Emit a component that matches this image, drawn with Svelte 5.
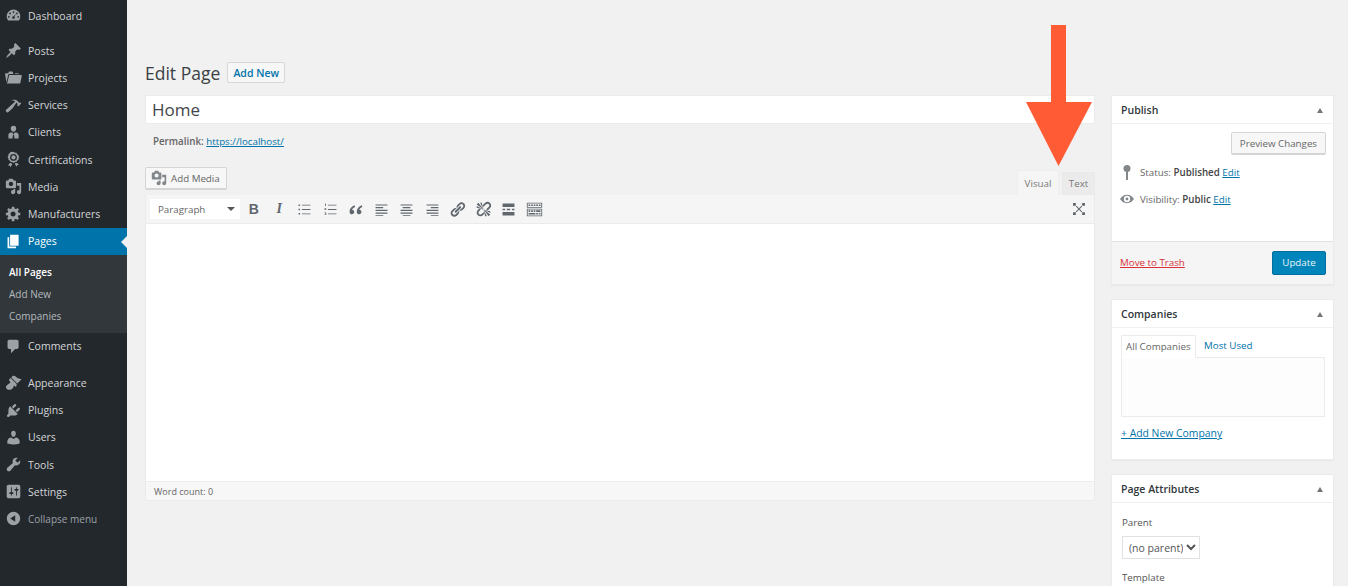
<script>
	// Dashicons style paths, 20x20 box
	const icons = {
		dashboard: "M3.76 16h12.48A7.98 7.98 0 0 0 18 11a8 8 0 0 0-16 0c0 1.9.66 3.64 1.76 5zM10 5a1 1 0 1 1 0 2 1 1 0 0 1 0-2zM6 6.5a1 1 0 1 1 0 2 1 1 0 0 1 0-2zM4.5 10.5a1 1 0 1 1 0 2 1 1 0 0 1 0-2zM14 6.5a1 1 0 1 1 0 2 1 1 0 0 1 0-2zM15.5 10.5a1 1 0 1 1 0 2 1 1 0 0 1 0-2zM12.8 7.6l-1.6 4a1.5 1.5 0 1 1-2.4 0 1.5 1.5 0 0 1 1.6-.6z",
		post: "M10.44 3.02l1.82-1.82 6.36 6.35-1.83 1.82c-1.05-.68-2.48-.57-3.41.36l-.75.75c-.92.93-1.04 2.35-.35 3.41l-1.83 1.82-2.41-2.41-2.8 2.79c-.42.42-3.38 2.71-3.8 2.29s1.86-3.39 2.28-3.81l2.79-2.79L4.1 9.36l1.83-1.82c1.05.69 2.48.57 3.4-.36l.75-.75c.93-.92 1.05-2.35.36-3.41z",
		folder: "M4 5H.78c-.37 0-.74.32-.69.84l1.56 9.99S3.5 8.47 3.86 6.7c.11-.53.61-.7.98-.7H10s-.7-2.08-.77-2.31C9.11 3.25 8.89 3 8.45 3H5.14c-.36 0-.7.23-.8.64C4.25 4.04 4 5 4 5zm-1.33 11.25c-.31.47-.76.75-1.26.75h15.73c.54 0 .92-.31 1.03-.83.44-2.19 1.68-8.44 1.68-8.44.07-.5-.3-.73-.62-.73H16V5.53c0-.16-.26-.53-.66-.53h-3.76s.41 1 .87 1h2.91c.16 0 .3 0 .3.3V7H5.59c-.32 0-.68.2-.78.52 0 0-1.9 7.9-2.14 8.73z",
		hammer: "M17.7 6.32l1.41 1.42-3.47 3.41-1.42-1.42.84-.82c-.32-.76-.81-1.57-1.51-2.31l-4.61 6.59-5.26 4.7c-.39.39-1.02.39-1.42 0l-1.2-1.21c-.39-.39-.39-1.02 0-1.41l10.97-9.92c-1.37-.86-3.21-1.46-5.67-1.48 2.7-.82 4.95-.93 6.58-.3 1.7.66 2.82 2.2 3.91 3.58z",
		client: "M10 2a3.2 3.2 0 0 1 3.2 3.4c0 2-1.3 3.8-3.2 3.8S6.8 7.4 6.8 5.4A3.2 3.2 0 0 1 10 2zM7 10h1.7L10 12.5 11.3 10H13c1.7 0 3 1.4 3 3v4H4v-4c0-1.6 1.3-3 3-3zm2.4 3l-.6 4h2.4l-.6-4z",
		award: "M10 1l1.600 1.100 1.900-.1.8 1.700 1.700.9-.1 1.900L17 7l-1.100 1.600.1 1.900-1.700.8-.8 1.700-1.900-.1L10 14l-1.600-1.100-1.900.1-.8-1.700-1.700-.8.1-1.900L3 7l1.100-1.500-.1-1.900 1.700-.9.8-1.700 1.900.1zm0 2.500a4 4 0 1 0 0 8 4 4 0 0 0 0-8zm0 1.500a2.500 2.500 0 1 1 0 5 2.500 2.500 0 0 1 0-5zM5.500 14l2 .5 1 1-2 3.500-1-2-2 .3zm9 0l2 2.800-2-.3-1 2-2-3.500 1-1z",
		media: "M13 11V4c0-.55-.45-1-1-1h-1.67L9 1H5L3.67 3H2c-.55 0-1 .45-1 1v7c0 .55.45 1 1 1h10c.55 0 1-.45 1-1zM7 4.500c1.380 0 2.500 1.120 2.500 2.500S8.380 9.500 7 9.500 4.500 8.380 4.500 7 5.620 4.500 7 4.500zM14 6h5v10.500c0 1.380-1.120 2.500-2.500 2.500S14 17.880 14 16.500s1.120-2.500 2.500-2.500c.17 0 .34.02.5.05V9h-3V6zm-4 8.050V13h2v3.500c0 1.380-1.120 2.500-2.500 2.500S7 17.880 7 16.500 8.120 14 9.500 14c.17 0 .34.02.5.05z",
		gear: "M18 12h-2.180c-.17.7-.44 1.350-.81 1.930l1.540 1.540-2.100 2.100-1.540-1.540c-.58.36-1.230.63-1.910.79V19H8v-2.180c-.68-.16-1.330-.43-1.910-.79l-1.540 1.540-2.120-2.120 1.540-1.540c-.36-.58-.63-1.230-.79-1.910H1V9.030h2.170c.16-.7.44-1.350.8-1.940L2.430 5.550l2.100-2.100 1.540 1.540c.58-.37 1.240-.64 1.930-.81V2h3v2.180c.68.16 1.330.43 1.910.79l1.540-1.540 2.120 2.120-1.540 1.540c.36.59.64 1.240.8 1.940H18V12zm-8.500 1.500c1.660 0 3-1.340 3-3s-1.340-3-3-3-3 1.340-3 3 1.340 3 3 3z",
		page: "M6 15V2h10v13H6zm-1 1h8v2H3V5h2v11z",
		comment: "M5 2h9c1.100 0 2 .9 2 2v7c0 1.100-.9 2-2 2h-2l-5 5v-5H5c-1.100 0-2-.9-2-2V4c0-1.100.9-2 2-2z",
		brush: "M14.480 11.060L7.410 3.990l1.500-1.500c.5-.56 2.300-.47 3.510.32 1.210.8 1.430 1.280 2.910 2.100 1.180.64 2.450 1.260 4.450.85zm-.71.71L6.700 4.700 4.930 6.470c-.39.39-.39 1.020 0 1.410l1.060 1.060c.39.39.39 1.030 0 1.420-.6.6-1.430 1.110-2.210 1.690-.35.26-.7.53-1.010.84C1.430 13.230.99 14.930 1.230 15.940c.21.88.9 1.870 1.950 2.470.88.36 2.550.3 3.930-.24.7-.27 1.300-.7 1.850-1.230.59-.59.57-1.040 1.150-2.210.58-1.160.85-1.050 1.440-.46l.41.41c.39.39 1.020.39 1.410 0z",
		plugin: "M13.110 4.360L9.870 7.600 8 5.730l3.240-3.240c.35-.34 1.050-.2 1.560.32.52.51.66 1.210.31 1.550zm-8 1.770l.91-1.120 9.010 9.010-1.190.84c-.71.71-2.630 1.160-3.820 1.160H6.140L4.900 17.260c-.59.59-1.540.59-2.120 0-.59-.58-.59-1.530 0-2.120l1.240-1.240v-3.880c0-1.130.4-3.190 1.090-3.890zm7.260 3.970l3.240-3.240c.34-.35 1.040-.21 1.550.31.52.51.66 1.210.31 1.550l-3.240 3.250z",
		users: "M10 9.250c-2.270 0-2.730-3.440-2.730-3.440C7 4.020 7.820 2 9.970 2c2.160 0 2.980 2.020 2.710 3.810 0 0-.41 3.440-2.680 3.440zm0 2.570L12.720 10c2.390 0 4.520 2.330 4.520 4.530v2.490s-3.650 1.130-7.240 1.130c-3.650 0-7.240-1.130-7.240-1.130v-2.490c0-2.250 1.940-4.480 4.470-4.480z",
		tools: "M16.680 9.770c-1.340 1.340-3.300 1.670-4.950.99l-5.410 6.520c-.99.99-2.590.99-3.580 0s-.99-2.590 0-3.570l6.520-5.420c-.68-1.650-.35-3.610.99-4.950 1.280-1.280 3.120-1.620 4.720-1.060l-2.890 2.890 2.820 2.820 2.860-2.870c.53 1.580.18 3.390-1.080 4.650z",
		settings: "M18 16V4c0-1.100-.9-2-2-2H4c-1.100 0-2 .9-2 2v12c0 1.100.9 2 2 2h12c1.100 0 2-.9 2-2zM8 11h1c.55 0 1 .45 1 1s-.45 1-1 1H8v1.500c0 .28-.22.5-.5.5s-.5-.22-.5-.5V13H6c-.55 0-1-.45-1-1s.45-1 1-1h1V5.500c0-.28.22-.5.5-.5s.5.22.5.5V11zm5-2h-1c-.55 0-1-.45-1-1s.45-1 1-1h1V5.500c0-.28.22-.5.5-.5s.5.22.5.5V7h1c.55 0 1 .45 1 1s-.45 1-1 1h-1v5.500c0 .28-.22.5-.5.5s-.5-.22-.5-.5V9z",
		collapse: "M10 2.160c4.330 0 7.840 3.510 7.840 7.840s-3.510 7.840-7.840 7.840S2.160 14.330 2.160 10 5.710 2.160 10 2.160zm2 11.720V6.120L6.180 9.970z"
	};

	// Menu lateral, agrupado pelos separadores
	const menuGroups = [
		[{ label: "Dashboard", icon: "dashboard" }],
		[
			{ label: "Posts", icon: "post" },
			{ label: "Projects", icon: "folder" },
			{ label: "Services", icon: "hammer" },
			{ label: "Clients", icon: "client" },
			{ label: "Certifications", icon: "award" },
			{ label: "Media", icon: "media" },
			{ label: "Manufacturers", icon: "gear" },
			{ label: "Pages", icon: "page", current: true, sub: ["All Pages", "Add New", "Companies"] },
			{ label: "Comments", icon: "comment" }
		],
		[
			{ label: "Appearance", icon: "brush" },
			{ label: "Plugins", icon: "plugin" },
			{ label: "Users", icon: "users" },
			{ label: "Tools", icon: "tools" },
			{ label: "Settings", icon: "settings" }
		]
	];

	// Botoes da barra do editor
	const toolbar = [
		"M3 4h1.800v1.800H3zM7 4.400h10v1H7zM3 9.100h1.800v1.800H3zM7 9.500h10v1H7zM3 14.200h1.800V16H3zM7 14.600h10v1H7z",
		"M3.500 3h1v3h-1zM7 4.400h10v1H7zM3 8.500h2v.8H3.800v.5H5v.7H3zM7 9.500h10v1H7zM3 13.500h2v3H3v-.7h1.200v-.4H3.400v-.6h.8V14.200H3zM7 14.600h10v1H7z",
		"M9 5C5.500 6.500 3 9 3 12.500c0 2 1.300 3 2.800 3s2.700-1.200 2.700-2.700-1-2.500-2.500-2.600c.3-1.200 1.800-2.400 3.500-3.200zM17.500 5C14 6.500 11.500 9 11.500 12.500c0 2 1.300 3 2.800 3s2.700-1.200 2.700-2.700-1-2.500-2.500-2.600c.3-1.200 1.800-2.400 3.500-3.200z",
		"M3 4h14v1.300H3zM3 7.200h9v1.300H3zM3 10.400h14v1.300H3zM3 13.600h14v1.300H3zM3 16.400h9v1H3z",
		"M3 4h14v1.300H3zM5.500 7.200h9v1.300h-9zM3 10.400h14v1.300H3zM3 13.600h14v1.300H3zM5.500 16.400h9v1h-9z",
		"M3 4h14v1.300H3zM8 7.200h9v1.300H8zM3 10.400h14v1.300H3zM3 13.600h14v1.300H3zM8 16.400h9v1H8z",
		"M17.740 2.760c1.680 1.690 1.680 4.410 0 6.100l-1.530 1.520c-1.120 1.120-2.700 1.490-4.130 1.120l2.620-2.620.76-.77.76-.76c.84-.84.84-2.200 0-3.040-.84-.85-2.200-.85-3.040 0l-.77.76-3.380 3.380c-.37-1.430 0-3.010 1.120-4.120l1.520-1.530c1.690-1.680 4.420-1.680 6.100 0zM8.590 13.430l5.340-5.340c.42-.42.42-1.100 0-1.520-.44-.43-1.130-.39-1.530 0l-5.330 5.340c-.42.42-.42 1.100 0 1.520.44.430 1.130.39 1.520 0zm-.76 2.290l4.140-4.130c.38 1.440 0 3.020-1.120 4.130l-1.520 1.520c-1.690 1.690-4.410 1.690-6.100 0-1.680-1.680-1.680-4.410 0-6.100l1.530-1.520c1.120-1.120 2.700-1.490 4.130-1.130l-4.140 4.140c-.85.840-.85 2.200 0 3.050.84.840 2.200.84 3.040 0z",
		"M17.740 2.260c1.680 1.690 1.680 4.410 0 6.100l-1.530 1.520c-.32.33-.69.58-1.080.77L13 10l1.690-1.640.76-.77.76-.76c.84-.84.84-2.200 0-3.040-.84-.85-2.200-.85-3.040 0l-.77.76-.76.76L10 7l-.65-2.140c.19-.38.44-.75.77-1.070l1.520-1.530c1.690-1.680 4.420-1.680 6.100 0zM2 4l8 6-6-8zm4-2l4 8-2-8H6zM2 6l8 4-8-2V6zm7.360 7.690L10 13l.74 2.350-1.380 1.370c-1.690 1.680-4.410 1.680-6.100 0-1.680-1.680-1.680-4.420 0-6.100l1.390-1.380L7 10l-.69.64-1.520 1.530c-.85.840-.85 2.200 0 3.040.84.85 2.200.85 3.040 0zM18 16l-8-6 6 8zm-4 2l-4-8 2 8h2zm4-4l-8-4 8 2v2z",
		"M17 7V3H3v4h14zM6 11V9H3v2h3zm6 0V9H8v2h4zm5 0V9h-3v2h3zm0 6v-4H3v4h14z",
		"M19 2v6H1V2h18zm-1 5V3H2v4h16zM5 4v2H3V4h2zm3 0v2H6V4h2zm3 0v2H9V4h2zm3 0v2h-2V4h2zm3 0v2h-2V4h2zm2 5v9H1V9h18zm-1 8v-7H2v7h16zM5 11v2H3v-2h2zm3 0v2H6v-2h2zm3 0v2H9v-2h2zm6 0v2h-5v-2h5zm-6 3v2H3v-2h8zm3 0v2h-2v-2h2zm3 0v2h-2v-2h2z"
	];
</script>

{#snippet icon(name, size = 20)}
	<svg class="icon" width={size} height={size} viewBox="0 0 20 20" fill="currentColor" fill-rule="evenodd" aria-hidden="true"><path d={icons[name]} /></svg>
{/snippet}

<div class="page">
	<nav class="sidebar">
		{#each menuGroups as group}
			<ul class="menu-group">
				{#each group as item}
					<li class="menu-item" class:current={item.current}>
						{@render icon(item.icon, 17)}
						<span>{item.label}</span>
					</li>
					{#if item.sub}
						<ul class="submenu">
							{#each item.sub as link, i}
								<li class:active={i === 0}>{link}</li>
							{/each}
						</ul>
					{/if}
				{/each}
			</ul>
		{/each}
		<div class="collapse">
			{@render icon("collapse", 17)}
			<span>Collapse menu</span>
		</div>
	</nav>

	<main class="content">
		<header class="heading">
			<h1>Edit Page</h1>
			<button class="add-new">Add New</button>
		</header>

		<div class="columns">
			<section class="editor-col">
				<input class="title-input" value="Home" />
				<p class="permalink"><b>Permalink:</b> <a href="#home">https://localhost/</a></p>

				<div class="media-row">
					<button class="btn add-media">{@render icon("media", 16)} Add Media</button>
					<div class="tabs">
						<span class="tab active">Visual</span>
						<span class="tab">Text</span>
					</div>
				</div>

				<div class="editor">
					<div class="toolbar">
						<div class="format-select">Paragraph<i class="caret"></i></div>
						<span class="tool-btn letter">B</span>
						<span class="tool-btn letter italic">I</span>
						{#each toolbar as d}
							<span class="tool-btn">
								<svg width="17" height="17" viewBox="0 0 20 20" fill="currentColor" fill-rule="evenodd"><path {d} /></svg>
							</span>
						{/each}
						<span class="fullscreen">
							<svg width="14" height="14" viewBox="0 0 20 20" fill="currentColor" stroke="none"><path d="M5.500 6.500l1-1 8 8-1 1zM13.500 5.500l1 1-8 8-1-1z" /><path d="M1.500 1.500h4v4h-4zM14.500 1.500h4v4h-4zM1.500 14.500h4v4h-4zM14.500 14.500h4v4h-4z" /></svg>
						</span>
					</div>
					<div class="editor-body"></div>
					<div class="statusbar">Word count: 0</div>
				</div>
			</section>

			<aside class="side-col">
				<div class="box publish">
					<h2>Publish<i class="toggle"></i></h2>
					<div class="publish-body">
						<div class="preview-row"><button class="btn">Preview Changes</button></div>
						<div class="meta status">
							<svg width="14" height="17" viewBox="0 0 14 17" fill="#82878c"><circle cx="7" cy="4.500" r="3.500" /><rect x="6" y="7" width="2" height="9" /></svg>
							<span>Status: <b>Published</b> <a href="#edit">Edit</a></span>
						</div>
						<div class="meta">
							<svg width="14" height="12" viewBox="0 0 20 14" fill="#82878c" fill-rule="evenodd"><path d="M10 1c4.500 0 8 3 10 6-2 3-5.500 6-10 6S2 10 0 7c2-3 5.500-6 10-6zm0 1.500a4.500 4.500 0 1 0 0 9 4.500 4.500 0 0 0 0-9zM10 5a2 2 0 1 1 0 4 2 2 0 0 1 0-4z" /></svg>
							<span>Visibility: <b>Public</b> <a href="#edit">Edit</a></span>
						</div>
					</div>
					<div class="publish-foot">
						<a class="trash" href="#trash">Move to Trash</a>
						<button class="update">Update</button>
					</div>
				</div>

				<div class="box companies">
					<h2>Companies<i class="toggle"></i></h2>
					<div class="companies-body">
						<div class="cat-tabs">
							<span class="cat-tab active">All Companies</span>
							<a class="cat-tab" href="#used">Most Used</a>
						</div>
						<div class="cat-panel"></div>
						<a class="add-company" href="#add">+ Add New Company</a>
					</div>
				</div>

				<div class="box attributes">
					<h2>Page Attributes<i class="toggle"></i></h2>
					<div class="attributes-body">
						<label for="parent">Parent</label>
						<select id="parent"><option>(no parent)</option></select>
						<label for="template" class="template-label">Template</label>
					</div>
				</div>
			</aside>
		</div>
	</main>

	<!-- Seta de destaque por cima da tela -->
	<svg class="arrow" width="66" height="142" viewBox="0 0 66 142" fill="#ff5c36"><path d="M25 0h15v77h26L32.500 141 0 77h25z" /></svg>
</div>

<style>
	:global(body) {
		background: #f1f1f1;
		font-family: "Open Sans", "Noto Sans", sans-serif;
		color: #444;
	}

	.page {
		position: relative;
		display: flex;
		height: 586px;
		overflow: hidden;
		font-size: 9.750px;
	}

	/* Menu lateral */
	.sidebar {
		flex: 0 0 127px;
		padding-top: 2px;
		background: #23282d;
		color: #d4d6d7;
		font-size: 10.500px;
	}

	.menu-group {
		margin: 0 0 8px;
		padding: 0;
		list-style: none;
	}

	.menu-group:nth-child(2) {
		margin-bottom: 9.500px;
	}

	.menu-item,
	.collapse {
		display: flex;
		align-items: center;
		gap: 6px;
		height: 27.200px;
		padding-left: 6px;
	}

	.menu-item :global(.icon),
	.collapse :global(.icon) {
		flex: none;
		color: #9ca1a6;
		margin-left: -1px;
	}

	.menu-item.current {
		position: relative;
		background: #0073aa;
		color: #fff;
	}

	.menu-item.current :global(.icon) {
		color: #fff;
	}

	.menu-item.current::after {
		content: "";
		position: absolute;
		right: 0;
		top: 8px;
		border: 6px solid transparent;
		border-left: 0;
		border-right-color: #f1f1f1;
	}

	.submenu {
		margin: 0;
		padding: 6px 0 6px 9px;
		background: #32373c;
		list-style: none;
		color: #b4b9be;
		font-size: 10px;
	}

	.submenu li {
		height: 22px;
		line-height: 22px;
	}

	.submenu li.active {
		color: #fff;
		font-weight: 600;
	}

	.collapse {
		margin-top: -8px;
		color: #9ca1a6;
		font-size: 10px;
	}

	/* Conteudo */
	.content {
		flex: 1;
		padding: 62px 14px 0 18px;
		min-width: 0;
	}

	.heading {
		display: flex;
		align-items: center;
		gap: 7px;
		height: 21px;
		margin-bottom: 12px;
	}

	h1 {
		margin: 0;
		font-size: 17.500px;
		font-weight: 400;
		color: #3a3f44;
	}

	.add-new {
		height: 21px;
		width: 58px;
		padding: 0;
		border: 1px solid #d8d8d8;
		border-radius: 2px;
		background: #f7f7f7;
		color: #0073aa;
		font: 600 10.500px "Open Sans", sans-serif;
	}

	.columns {
		display: flex;
		gap: 16px;
		align-items: flex-start;
	}

	.editor-col {
		flex: 1;
		min-width: 0;
	}

	.side-col {
		flex: 0 0 223px;
		min-width: 0;
	}

	.title-input {
		display: block;
		box-sizing: border-box;
		width: 100%;
		height: 29px;
		padding: 0 6px;
		border: 1px solid #ebebeb;
		background: #fff;
		color: #3f4549;
		font: 400 17px "Open Sans", sans-serif;
		outline: none;
	}

	.permalink {
		margin: 10px 0 0 8px;
		height: 16px;
		line-height: 16px;
		color: #666;
	}

	.permalink b {
		font-weight: 600;
	}

	a {
		color: #0073aa;
	}

	.media-row {
		display: flex;
		justify-content: space-between;
		align-items: flex-end;
		height: 38px;
		margin-top: 7px;
	}

	.btn {
		display: inline-flex;
		align-items: center;
		gap: 3px;
		padding: 0 8px;
		height: 23px;
		border: 1px solid #d5d5d5;
		border-bottom-width: 2px;
		border-radius: 2px;
		background: #f7f7f7;
		color: #666;
		font: 400 9.750px "Open Sans", sans-serif;
		white-space: nowrap;
	}

	.add-media {
		width: 82px;
		padding: 0 5px;
		gap: 4px;
		margin-bottom: 5px;
	}

	.add-media :global(.icon) {
		color: #82878c;
	}

	.tabs {
		display: flex;
		align-items: flex-end;
		gap: 3px;
	}

	.tab {
		box-sizing: border-box;
		height: 23px;
		width: 33px;
		line-height: 22px;
		text-align: center;
		background: #ebebeb;
		border: 1px solid #e9e9e9;
		border-bottom: 0;
		color: #777;
	}

	.tab.active {
		height: 25px;
		width: 42px;
		line-height: 26px;
		background: #f5f5f5;
		border-color: #eee;
	}

	.editor {
		border: 1px solid #ebebeb;
		border-top: 0;
		background: #fff;
	}

	.toolbar {
		box-sizing: border-box;
		display: flex;
		align-items: center;
		height: 29px;
		padding: 0 4px;
		background: #f5f5f5;
		border-bottom: 1px solid #ebebeb;
		color: #60676e;
	}

	.format-select {
		position: relative;
		box-sizing: border-box;
		width: 90px;
		height: 20px;
		line-height: 21px;
		padding-left: 8px;
		margin-right: 1px;
		background: #fff;
		color: #666;
	}

	.caret {
		position: absolute;
		right: 5px;
		top: 8px;
		border: 4px solid transparent;
		border-top: 4px solid #555;
		border-bottom: 0;
	}

	.tool-btn {
		display: flex;
		align-items: center;
		justify-content: center;
		width: 25.500px;
		height: 24px;
	}

	.letter {
		font: 700 14px "Liberation Sans", sans-serif;
	}

	.letter.italic {
		font: italic 700 14px "Liberation Serif", serif;
	}

	.fullscreen {
		display: flex;
		margin-left: auto;
		margin-right: 4px;
	}

	.editor-body {
		height: 257px;
		background: #fff;
	}

	.statusbar {
		box-sizing: border-box;
		height: 19px;
		line-height: 19px;
		padding-left: 8px;
		background: #f7f7f7;
		border-top: 1px solid #eee;
		color: #666;
		font-size: 9px;
	}

	/* Caixas laterais */
	.box {
		margin-bottom: 14px;
		background: #fff;
		border: 1px solid #ebebeb;
		box-shadow: 0 1px 1px rgba(0, 0, 0, 0.03);
	}

	h2 {
		position: relative;
		box-sizing: border-box;
		height: 28px;
		margin: 0;
		padding-left: 9px;
		line-height: 28px;
		border-bottom: 1px solid #f0f0f0;
		font-size: 10.500px;
		font-weight: 600;
		color: #32373c;
	}

	.toggle {
		position: absolute;
		right: 10px;
		top: 12px;
		border: 3.500px solid transparent;
		border-top: 0;
		border-bottom: 5px solid #72777c;
	}

	.publish-body {
		box-sizing: border-box;
		height: 117px;
		padding: 8px 7px 0 8px;
	}

	.preview-row {
		display: flex;
		justify-content: flex-end;
	}

	.meta {
		display: flex;
		align-items: center;
		gap: 6px;
		height: 18px;
		margin-top: 9px;
		color: #666;
	}

	.status {
		margin-top: 8px;
	}

	.meta svg {
		flex: 0 0 auto;
		width: 14px;
	}

	.meta b {
		font-weight: 600;
		color: #444;
	}

	.publish-foot {
		display: flex;
		align-items: center;
		justify-content: space-between;
		height: 43px;
		padding: 0 7px 1px 8px;
		background: #f5f5f5;
		border-top: 1px solid #e2e2e2;
		box-sizing: border-box;
	}

	.trash {
		color: #d9303c;
	}

	.update {
		width: 54px;
		height: 24px;
		padding: 0;
		border: 1px solid #006f9e;
		border-radius: 2px;
		background: #0085ba;
		color: #e8f4f9;
		font: 400 9.750px "Open Sans", sans-serif;
	}

	.companies-body {
		height: 131px;
		padding: 7px 8px 0 9px;
		box-sizing: border-box;
	}

	.cat-tabs {
		display: flex;
		align-items: flex-end;
		height: 22px;
	}

	.cat-tab {
		box-sizing: border-box;
		height: 23px;
		line-height: 24px;
		padding: 0 5px;
		margin-left: 3px;
		white-space: nowrap;
		text-decoration: none;
	}

	.cat-tab.active {
		position: relative;
		margin-left: 0;
		padding: 0 4px;
		width: 75px;
		border: 1px solid #ebebeb;
		border-bottom-color: #fff;
		line-height: 22px;
		color: #666;
		margin-bottom: -1px;
		height: 23px;
	}

	.cat-panel {
		box-sizing: border-box;
		height: 60px;
		background: #fdfdfd;
		border: 1px solid #ebebeb;
	}

	.add-company {
		display: block;
		margin-top: 9px;
		line-height: 14px;
		font-size: 10.400px;
		font-weight: 400;
	}

	.attributes-body {
		padding: 12px 9px 0;
		color: #555;
	}

	.attributes-body label {
		display: block;
		margin-left: 1px;
		line-height: 16px;
		font-weight: 400;
	}

	select {
		display: block;
		width: 78px;
		height: 23px;
		margin: 5px 0 0 1px;
		padding: 0 0 0 2px;
		border: 1px solid #e2e2e2;
		background: #fff;
		color: #555;
		font: 400 10.500px "Open Sans", sans-serif;
	}

	.template-label {
		margin-top: 11px;
	}

	.arrow {
		position: absolute;
		left: 1026px;
		top: 25px;
	}
</style>
